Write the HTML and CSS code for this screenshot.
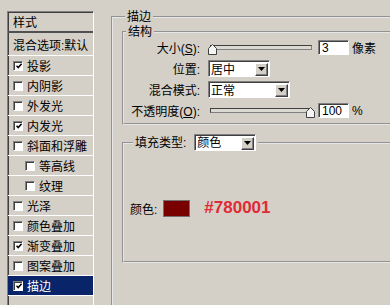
FILE: index.html
```html
<!DOCTYPE html>
<html lang="zh-CN">
<head>
    <meta charset="UTF-8">
    <meta name="viewport" content="width=device-width, initial-scale=1.0">
    <title>图层样式 - 描边</title>
    <link rel="stylesheet" href="styles.css">
</head>
<body>
    <div class="dialog">
        <ul class="style-list">
            <li class="style-head">样式</li>
            <li class="style-blend">混合选项:默认</li>
            <li><span class="check"><svg viewBox="0 0 6 6"><path d="M0.5 2.8 L2.2 4.6 L5.6 0.8"/></svg></span>投影</li>
            <li><span class="check"></span>内阴影</li>
            <li><span class="check"></span>外发光</li>
            <li><span class="check"><svg viewBox="0 0 6 6"><path d="M0.5 2.8 L2.2 4.6 L5.6 0.8"/></svg></span>内发光</li>
            <li><span class="check"></span>斜面和浮雕</li>
            <li class="indent"><span class="check"></span>等高线</li>
            <li class="indent"><span class="check"></span>纹理</li>
            <li><span class="check"></span>光泽</li>
            <li><span class="check"></span>颜色叠加</li>
            <li><span class="check"><svg viewBox="0 0 6 6"><path d="M0.5 2.8 L2.2 4.6 L5.6 0.8"/></svg></span>渐变叠加</li>
            <li><span class="check"></span>图案叠加</li>
            <li class="selected"><span class="check"><svg viewBox="0 0 6 6"><path d="M0.5 2.8 L2.2 4.6 L5.6 0.8"/></svg></span>描边</li>
            <li class="style-rest"></li>
        </ul>

        <fieldset class="group stroke">
            <legend>描边</legend>

            <fieldset class="group struct">
                <legend>结构</legend>
                <div class="rows">
                    <div class="field-row">
                        <label class="lbl">大小(<u>S</u>):</label>
                        <div class="slider">
                            <span class="track"></span>
                            <svg class="thumb" viewBox="0 0 9 11"><path d="M0.5 10.5 V4.5 L4.5 0.5 L8.5 4.5 V10.5 Z"/></svg>
                        </div>
                        <span class="num">3</span>
                        <span class="unit">像素</span>
                    </div>
                    <div class="field-row">
                        <label class="lbl">位置:</label>
                        <div class="select short">居中<span class="arrow"><svg viewBox="0 0 7 4"><path d="M0 0 H7 L3.5 4 Z"/></svg></span></div>
                    </div>
                    <div class="field-row">
                        <label class="lbl">混合模式:</label>
                        <div class="select long">正常<span class="arrow"><svg viewBox="0 0 7 4"><path d="M0 0 H7 L3.5 4 Z"/></svg></span></div>
                    </div>
                    <div class="field-row">
                        <label class="lbl">不透明度(<u>O</u>):</label>
                        <div class="slider">
                            <span class="track"></span>
                            <svg class="thumb end" viewBox="0 0 9 11"><path d="M0.5 10.5 V4.5 L4.5 0.5 L8.5 4.5 V10.5 Z"/></svg>
                        </div>
                        <span class="num">100</span>
                        <span class="unit">%</span>
                    </div>
                </div>
            </fieldset>

            <fieldset class="group fill">
                <legend>
                    <div class="fill-type">填充类型:
                        <div class="select short">颜色<span class="arrow"><svg viewBox="0 0 7 4"><path d="M0 0 H7 L3.5 4 Z"/></svg></span></div>
                    </div>
                </legend>
                <div class="color-row">
                    颜色:
                    <span class="swatch"></span>
                    <span class="hex">#780001</span>
                </div>
            </fieldset>
        </fieldset>
    </div>
</body>
</html>
```

FILE: styles.css
```css
body {
    margin: 0;
    background-color: #d4d0c8;
    color: #000;
    font-family: "Liberation Sans", "Noto Sans CJK SC", sans-serif;
    font-size: 12px;
    overflow: hidden;
}

.dialog {
    display: flex;
    align-items: flex-start;
    width: 390px;
    height: 305px;
    padding: 10px 0 0 7px;
    box-sizing: border-box;
    overflow: hidden;
}

/* left list of layer styles */
.style-list {
    flex: none;
    width: 87px;
    height: 310px;
    margin: 1px 0 0;
    padding: 0;
    list-style: none;
    box-sizing: border-box;
    border: 1px solid;
    border-color: #808080 #fff #fff #808080;
    box-shadow: inset 1px 1px 0 #404040;
}

.style-list li {
    display: flex;
    align-items: center;
    gap: 4px;
    height: 19px;
    padding-left: 5px;
    border-bottom: 1px solid #fff;
    white-space: nowrap;
}

.style-list .style-head {
    border-bottom: 2px solid #505050;
}

.style-list .style-blend {
    height: 22px;
}

.style-list .indent {
    padding-left: 17px;
}

.style-list .selected {
    background-color: #0a246a;
    color: #fff;
}

.style-list .style-rest {
    border-bottom: none;
}

.check {
    flex: none;
    display: flex;
    align-items: center;
    justify-content: center;
    width: 10px;
    height: 10px;
    box-sizing: border-box;
    background-color: #fff;
    border: 1px solid;
    border-color: #808080 #fff #fff #808080;
    box-shadow: inset 1px 1px 0 #404040;
}

.check svg {
    width: 6px;
    height: 6px;
    margin: 1px 0 0 1px;
}

.check path {
    fill: none;
    stroke: #000;
    stroke-width: 1.5;
}

/* group boxes */
.group {
    margin: 0;
    padding: 0;
    min-width: 0;
    border: 2px groove #e6e6e6;
    box-sizing: border-box;
}

.group > legend {
    padding: 0 2px;
    line-height: 14px;
}

.stroke {
    flex: none;
    width: 300px;
    height: 320px;
    margin-left: 17px;
}

.stroke > legend {
    margin-left: 12px;
}

.struct {
    width: 290px;
    margin: 1px 0 0 9px;
    padding-bottom: 2px;
}

.struct > legend {
    margin-left: 2px;
}

.rows {
    margin-top: -2px;
}

.field-row {
    display: flex;
    align-items: center;
    height: 21px;
}

.lbl {
    flex: none;
    width: 76px;
    margin-right: 8px;
    text-align: right;
    white-space: nowrap;
}

.slider {
    position: relative;
    flex: none;
    display: flex;
    align-items: center;
    width: 106px;
    height: 21px;
    margin-right: 4px;
}

.track {
    width: 102px;
    height: 5px;
    margin-left: 2px;
    box-sizing: border-box;
    background-color: #dcd9d2;
    border: 1px solid;
    border-color: #404040 #808080 #808080 #404040;
}

.thumb {
    position: absolute;
    top: 7px;
    left: 0;
    width: 9px;
    height: 11px;
}

.thumb.end {
    left: auto;
    right: -1px;
}

.thumb path {
    fill: #f4f4f4;
    stroke: #404040;
    stroke-width: 1;
}

.num {
    flex: none;
    display: flex;
    align-items: center;
    width: 31px;
    height: 15px;
    padding-left: 3px;
    box-sizing: border-box;
    background-color: #fff;
    border: 1px solid;
    border-color: #808080 #fff #fff #808080;
    box-shadow: inset 1px 1px 0 #404040;
}

.unit {
    margin-left: 3px;
}

.select {
    flex: none;
    display: flex;
    align-items: center;
    height: 17px;
    padding-left: 2px;
    box-sizing: border-box;
    background-color: #fff;
    border: 1px solid;
    border-color: #808080 #fff #fff #808080;
    box-shadow: inset 1px 1px 0 #404040;
}

.select.short {
    width: 62px;
}

.select.long {
    width: 82px;
}

.arrow {
    display: flex;
    align-items: center;
    justify-content: center;
    width: 13px;
    height: 13px;
    margin: 1px 1px 0 auto;
    box-sizing: border-box;
    background-color: #d4d0c8;
    border: 1px solid;
    border-color: #fff #404040 #404040 #fff;
    box-shadow: inset -1px -1px 0 #808080;
}

.arrow svg {
    width: 7px;
    height: 4px;
}

.fill {
    width: 290px;
    margin: 9px 0 0 9px;
    padding-bottom: 44px;
}

.fill > legend {
    margin-left: 9px;
}

.fill-type {
    display: flex;
    align-items: center;
    gap: 8px;
}

.color-row {
    display: flex;
    align-items: center;
    height: 18px;
    margin-top: 48px;
    padding-left: 6px;
}

.swatch {
    width: 27px;
    height: 17px;
    margin-left: 6px;
    box-sizing: border-box;
    background-color: #780001;
    border: 1px solid #707070;
}

.hex {
    margin-left: 14px;
    color: #e02b36;
    font-size: 17px;
    font-weight: bold;
}
```
